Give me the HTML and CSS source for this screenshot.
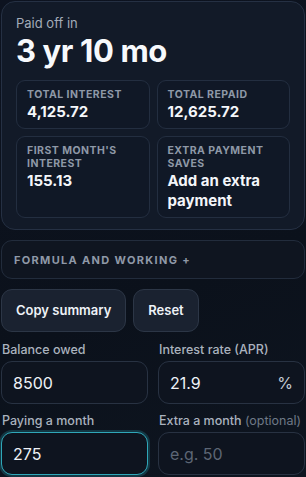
FILE: index.html
```html
<!DOCTYPE html>
<html lang="en">
<head>
<meta charset="utf-8">
<title>Payoff calculator</title>
<link rel="stylesheet" href="styles.css">
</head>
<body>
<main class="wrap">
  <section class="result">
    <div class="result-label">Paid off in</div>
    <div class="result-value">3 yr 10 mo</div>
    <div class="stats">
      <div class="stat">
        <div class="stat-label">Total interest</div>
        <div class="stat-value">4,125.72</div>
      </div>
      <div class="stat">
        <div class="stat-label">Total repaid</div>
        <div class="stat-value">12,625.72</div>
      </div>
      <div class="stat">
        <div class="stat-label">First month's interest</div>
        <div class="stat-value">155.13</div>
      </div>
      <div class="stat">
        <div class="stat-label">Extra payment saves</div>
        <div class="stat-value">Add an extra payment</div>
      </div>
    </div>
  </section>

  <div class="formula">Formula and working +</div>

  <div class="actions">
    <button class="btn" type="button">Copy summary</button>
    <button class="btn" type="button">Reset</button>
  </div>

  <div class="fields">
    <label class="field">
      <span class="field-label">Balance owed</span>
      <span class="input"><span class="input-text">8500</span></span>
    </label>
    <label class="field">
      <span class="field-label">Interest rate (APR)</span>
      <span class="input"><span class="input-text">21.9</span><span class="suffix">%</span></span>
    </label>
    <label class="field">
      <span class="field-label">Paying a month</span>
      <span class="input focused"><span class="input-text">275</span></span>
    </label>
    <label class="field">
      <span class="field-label">Extra a month <span class="optional">(optional)</span></span>
      <span class="input"><span class="input-text placeholder">e.g. 50</span></span>
    </label>
  </div>
</main>
</body>
</html>
```

FILE: styles.css
```css
* { box-sizing: border-box; }

html, body {
  margin: 0;
  padding: 0;
}

body {
  background: linear-gradient(160deg, #0d1320 0%, #0b111b 60%, #0e1520 100%);
  color: #f1f4f8;
  font-family: Inter, "Noto Sans", "DejaVu Sans", sans-serif;
  min-height: 477px;
  overflow: hidden;
}

.wrap {
  width: 304px;
  margin-left: 1px;
  padding-top: 1px;
}

.result {
  background: #121a28;
  border: 1px solid #253043;
  border-radius: 14px;
  padding: 12px 14px 11px;
}

.result-label {
  font-size: 13px;
  line-height: 18px;
  color: #a3acb9;
}

.result-value {
  font-size: 31px;
  line-height: 38px;
  font-weight: 700;
  letter-spacing: -0.4px;
  color: #f7f9fc;
  margin-bottom: 10px;
}

.stats {
  display: grid;
  grid-template-columns: 1fr 1fr;
  gap: 7px;
}

.stat {
  background: #101826;
  border: 1px solid #232e40;
  border-radius: 9px;
  padding: 7px 10px 6px;
}

.stat-label {
  font-size: 10.5px;
  line-height: 13px;
  font-weight: 700;
  letter-spacing: 0.045em;
  text-transform: uppercase;
  color: #8e98a7;
}

.stat-value {
  margin-top: 1px;
  font-size: 15px;
  line-height: 20px;
  font-weight: 700;
  color: #f4f6fa;
}

.formula {
  margin-top: 10px;
  height: 39px;
  border: 1px solid #222c3c;
  border-radius: 11px;
  background: #0f1520;
  padding: 0 12px;
  display: flex;
  align-items: center;
  font-size: 11px;
  font-weight: 700;
  letter-spacing: 0.12em;
  text-transform: uppercase;
  color: #8f99a8;
}

.actions {
  display: flex;
  gap: 7px;
  margin-top: 10px;
}

.btn {
  font-family: inherit;
  font-size: 13px;
  line-height: 19px;
  font-weight: 600;
  color: #eef2f7;
  background: #1a2230;
  border: 1px solid #2c3646;
  border-radius: 11px;
  padding: 11px 14px;
}

.fields {
  display: grid;
  grid-template-columns: 1fr 1fr;
  column-gap: 10px;
  row-gap: 8px;
  margin-top: 9px;
}

.field {
  display: flex;
  flex-direction: column;
  gap: 2px;
}

.field-label {
  font-size: 12.5px;
  line-height: 18px;
  font-weight: 500;
  color: #aab2be;
  padding-left: 1px;
  white-space: nowrap;
}

.optional {
  font-weight: 400;
  color: #6f7987;
}

.input {
  height: 43px;
  display: flex;
  align-items: center;
  justify-content: space-between;
  background: #0e141f;
  border: 1px solid #283242;
  border-radius: 11px;
  padding: 0 11px;
  font-size: 16px;
  color: #eef2f7;
}

.input.focused {
  border-color: #2fa7b8;
  box-shadow: 0 0 0 2px rgba(40, 150, 170, 0.28);
}

.placeholder {
  color: #5d6675;
}

.suffix {
  color: #c3cad4;
  font-size: 16px;
}
```
